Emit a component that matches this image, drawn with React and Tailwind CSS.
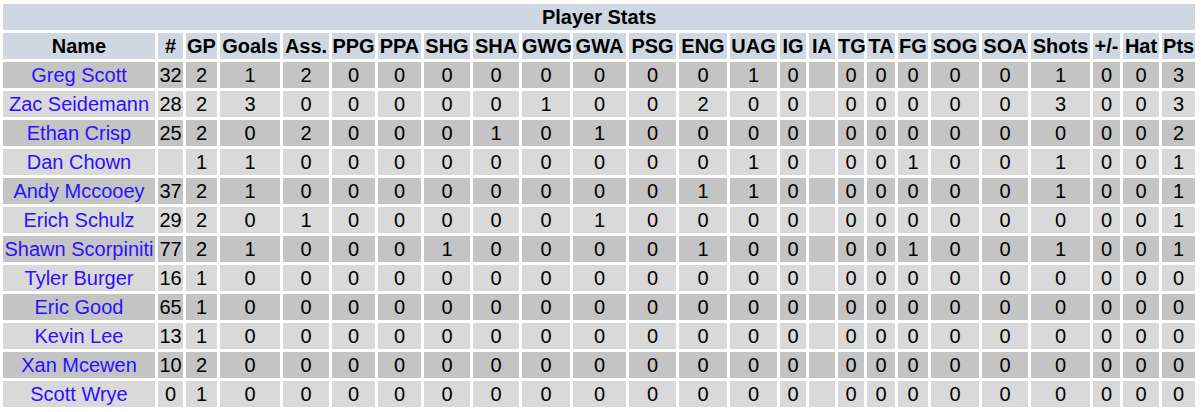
import React from "react";

const cols = [
  ["Name", 152], ["#", 25], ["GP", 31], ["Goals", 60], ["Ass.", 46], ["PPG", 43], ["PPA", 43],
  ["SHG", 46], ["SHA", 46], ["GWG", 48], ["GWA", 53], ["PSG", 47], ["ENG", 48], ["UAG", 47],
  ["IG", 26], ["IA", 26], ["TG", 26], ["TA", 28], ["FG", 30], ["SOG", 48], ["SOA", 46],
  ["Shots", 59], ["+/-", 27], ["Hat", 36], ["Pts", 33],
];

const rows = [
  ["Greg Scott", "32", "2", "1", "2", "0", "0", "0", "0", "0", "0", "0", "0", "1", "0", "", "0", "0", "0", "0", "0", "1", "0", "0", "3"],
  ["Zac Seidemann", "28", "2", "3", "0", "0", "0", "0", "0", "1", "0", "0", "2", "0", "0", "", "0", "0", "0", "0", "0", "3", "0", "0", "3"],
  ["Ethan Crisp", "25", "2", "0", "2", "0", "0", "0", "1", "0", "1", "0", "0", "0", "0", "", "0", "0", "0", "0", "0", "0", "0", "0", "2"],
  ["Dan Chown", "", "1", "1", "0", "0", "0", "0", "0", "0", "0", "0", "0", "1", "0", "", "0", "0", "1", "0", "0", "1", "0", "0", "1"],
  ["Andy Mccooey", "37", "2", "1", "0", "0", "0", "0", "0", "0", "0", "0", "1", "1", "0", "", "0", "0", "0", "0", "0", "1", "0", "0", "1"],
  ["Erich Schulz", "29", "2", "0", "1", "0", "0", "0", "0", "0", "1", "0", "0", "0", "0", "", "0", "0", "0", "0", "0", "0", "0", "0", "1"],
  ["Shawn Scorpiniti", "77", "2", "1", "0", "0", "0", "1", "0", "0", "0", "0", "1", "0", "0", "", "0", "0", "1", "0", "0", "1", "0", "0", "1"],
  ["Tyler Burger", "16", "1", "0", "0", "0", "0", "0", "0", "0", "0", "0", "0", "0", "0", "", "0", "0", "0", "0", "0", "0", "0", "0", "0"],
  ["Eric Good", "65", "1", "0", "0", "0", "0", "0", "0", "0", "0", "0", "0", "0", "0", "", "0", "0", "0", "0", "0", "0", "0", "0", "0"],
  ["Kevin Lee", "13", "1", "0", "0", "0", "0", "0", "0", "0", "0", "0", "0", "0", "0", "", "0", "0", "0", "0", "0", "0", "0", "0", "0"],
  ["Xan Mcewen", "10", "2", "0", "0", "0", "0", "0", "0", "0", "0", "0", "0", "0", "0", "", "0", "0", "0", "0", "0", "0", "0", "0", "0"],
  ["Scott Wrye", "0", "1", "0", "0", "0", "0", "0", "0", "0", "0", "0", "0", "0", "0", "", "0", "0", "0", "0", "0", "0", "0", "0", "0"],
];

export default function App() {
  return (
    <div className="bg-white pt-px" style={{ fontFamily: '"Liberation Sans", Arial, sans-serif' }}>
      <table className="table-fixed border-separate border-spacing-[3px] w-[1198px] text-[20px] leading-[23px] text-black">
        <colgroup>
          {cols.map(([n, w]) => (
            <col key={n} style={{ width: w }} />
          ))}
        </colgroup>
        <thead>
          <tr>
            <th colSpan={25} className="bg-[#cfd8e2] h-[26px] p-0 text-center font-bold">
              Player Stats
            </th>
          </tr>
          <tr>
            {cols.map(([n]) => (
              <th key={n} className="bg-[#cfd8e2] h-[26px] p-0 text-center font-bold whitespace-nowrap overflow-visible">
                {n}
              </th>
            ))}
          </tr>
        </thead>
        <tbody>
          {rows.map((r, i) => (
            <tr key={i} className={i % 2 === 0 ? "bg-[#c4c4c4]" : "bg-[#d9d9d9]"}>
              {r.map((c, j) => (
                <td key={j} className="h-[26px] p-0 text-center whitespace-nowrap">
                  {j === 0 ? <a className="text-[#2d10ff] no-underline">{c}</a> : c}
                </td>
              ))}
            </tr>
          ))}
        </tbody>
      </table>
    </div>
  );
}
